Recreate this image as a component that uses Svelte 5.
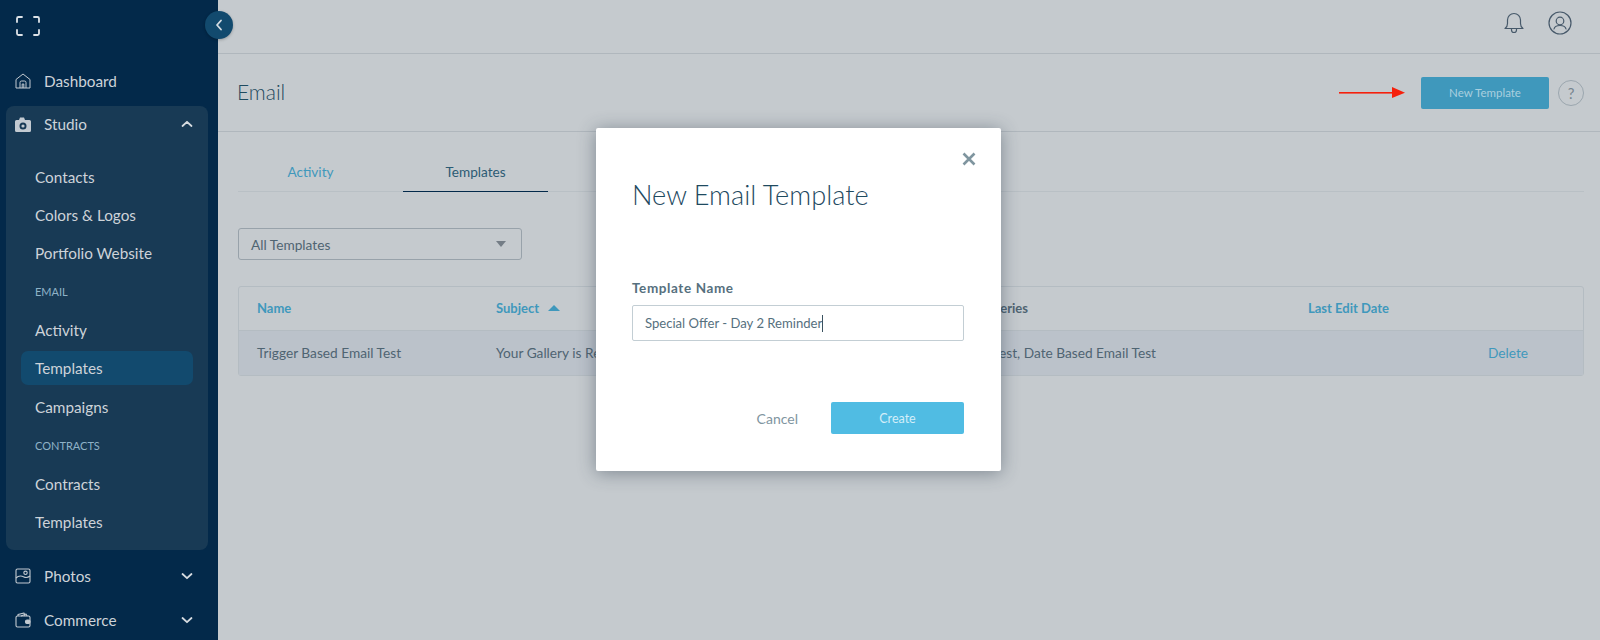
<script>
	const studioItems = [
		{ label: "Contacts" },
		{ label: "Colors & Logos" },
		{ label: "Portfolio Website" },
		{ label: "EMAIL", heading: true },
		{ label: "Activity" },
		{ label: "Templates", active: true },
		{ label: "Campaigns" },
		{ label: "CONTRACTS", heading: true },
		{ label: "Contracts" },
		{ label: "Templates" }
	];
</script>

<div class="page">
	<aside class="sidebar">
		<div class="logo-row">
			<svg class="logo" width="26" height="22" viewBox="0 0 26 22" fill="none" stroke="currentColor" stroke-width="1.800" stroke-linecap="round" stroke-linejoin="round">
				<path d="M7 2H3.500A1.500 1.500 0 0 0 2 3.500V7" />
				<path d="M19 2h3.500A1.500 1.500 0 0 1 24 3.500V7" />
				<path d="M2 15v3.500A1.500 1.500 0 0 0 3.500 20H7" />
				<path d="M24 15v3.500a1.500 1.500 0 0 1-1.500 1.500H19" />
			</svg>
		</div>

		<div class="nav-row">
			<svg class="nav-icon" width="16" height="16" viewBox="0 0 16 16" fill="none" stroke="currentColor" stroke-width="1" stroke-linejoin="round">
				<path d="M1 6.500 8 1l7 5.500V15H1z" />
				<path d="M5 15V9.500A1.500 1.500 0 0 1 6.500 8h3A1.500 1.500 0 0 1 11 9.500V15" />
				<path d="M7.200 15v-4h1.600v4" />
			</svg>
			<span>Dashboard</span>
		</div>

		<div class="studio">
			<div class="nav-row studio-head">
				<svg class="nav-icon" width="16" height="15" viewBox="0 0 16 15">
					<path fill="currentColor" fill-rule="evenodd" d="M1.500 3H4l1-2.500h4L10 3h4.500A1.500 1.500 0 0 1 16 4.500v9a1.500 1.500 0 0 1-1.500 1.500h-13A1.500 1.500 0 0 1 0 13.500v-9A1.500 1.500 0 0 1 1.500 3zM8 5.500a3.500 3.500 0 1 0 0 7 3.500 3.500 0 0 0 0-7z" />
					<circle cx="8" cy="9" r="1.600" fill="currentColor" />
				</svg>
				<span>Studio</span>
				<svg class="chevron" width="12" height="8" viewBox="0 0 12 8" fill="none" stroke="currentColor" stroke-width="1.800" stroke-linecap="round" stroke-linejoin="round">
					<path d="M1.500 6 6 1.800 10.500 6" />
				</svg>
			</div>
			<ul class="sub-list">
				{#each studioItems as item}
					<li class="sub-item" class:heading={item.heading} class:active={item.active}>
						<span>{item.label}</span>
					</li>
				{/each}
			</ul>
		</div>

		<div class="nav-row lower">
			<svg class="nav-icon" width="16" height="16" viewBox="0 0 16 16" fill="none" stroke="currentColor" stroke-width="1.100" stroke-linejoin="round">
				<rect x="1" y="1" width="14" height="14" rx="1.500" />
				<path d="M1 10c3-3 6-2 8-1s4 .5 6-1" />
				<circle cx="10.500" cy="4.800" r="1.700" />
			</svg>
			<span>Photos</span>
			<svg class="chevron" width="12" height="8" viewBox="0 0 12 8" fill="none" stroke="currentColor" stroke-width="1.800" stroke-linecap="round" stroke-linejoin="round">
				<path d="M1.500 2 6 6.200 10.500 2" />
			</svg>
		</div>
		<div class="nav-row">
			<svg class="nav-icon" width="16" height="16" viewBox="0 0 16 16" fill="none" stroke="currentColor" stroke-width="1.100" stroke-linejoin="round">
				<rect x="1" y="4" width="14" height="11" rx="1.500" />
				<path d="M3 4V2.500l6-1.500 1 3M6 4l5-2 1 2" />
				<rect x="10.500" y="8" width="4.500" height="3.500" rx="1.500" fill="currentColor" />
			</svg>
			<span>Commerce</span>
			<svg class="chevron" width="12" height="8" viewBox="0 0 12 8" fill="none" stroke="currentColor" stroke-width="1.800" stroke-linecap="round" stroke-linejoin="round">
				<path d="M1.500 2 6 6.200 10.500 2" />
			</svg>
		</div>
	</aside>

	<main class="main">
		<header class="topbar">
			<svg width="20" height="22" viewBox="0 0 20 22" fill="none" stroke="currentColor" stroke-width="1.200" stroke-linecap="round" stroke-linejoin="round">
				<path d="M1 16.500c1.500-1 2.500-2.500 2.500-5V8a6.500 6.500 0 0 1 13 0v3.500c0 2.500 1 4 2.500 5z" />
				<path d="M7.500 17v1a2.500 2.500 0 0 0 5 0v-1" />
			</svg>
			<svg width="24" height="24" viewBox="0 0 24 24" fill="none" stroke="currentColor" stroke-width="1.200" stroke-linecap="round">
				<circle cx="12" cy="12" r="11" />
				<circle cx="12" cy="10" r="3.800" />
				<path d="M6 18c.5-2.500 2.500-3.500 6-3.500s5.500 1 6 3.500" />
			</svg>
		</header>

		<div class="title-row">
			<h1>Email</h1>
			<svg class="arrow" width="66" height="14" viewBox="0 0 66 14">
				<rect x="0" y="6" width="54" height="1.600" fill="#f5200c" />
				<path d="M53 1l13 5.800L53 12z" fill="#f5200c" />
			</svg>
			<div class="new-btn">New Template</div>
			<div class="help">?</div>
		</div>

		<div class="content">
			<nav class="tabs">
				<div class="tab">Activity</div>
				<div class="tab current">Templates</div>
			</nav>

			<div class="select">
				<span>All Templates</span>
				<i class="caret"></i>
			</div>

			<div class="table">
				<div class="tr thead">
					<div class="link">Name</div>
					<div class="link">Subject <i class="sort"></i></div>
					<div class="dark">Used in Campaign Series</div>
					<div class="link">Last Edit Date</div>
					<div></div>
				</div>
				<div class="tr tbody">
					<div>Trigger Based Email Test</div>
					<div>Your Gallery is Ready</div>
					<div>Trigger Based Email Test, Date Based Email Test</div>
					<div></div>
					<div class="link plain">Delete</div>
				</div>
			</div>
		</div>
	</main>

	<button class="collapse" aria-label="Collapse sidebar">
		<svg width="8" height="12" viewBox="0 0 8 12" fill="none" stroke="currentColor" stroke-width="1.800" stroke-linecap="round" stroke-linejoin="round">
			<path d="M6 1.500 2 6l4 4.500" />
		</svg>
	</button>

	<div class="modal">
		<svg class="close" width="14" height="14" viewBox="0 0 14 14" fill="none" stroke="currentColor" stroke-width="2.600">
			<path d="M1.500 1.500l11 11M12.500 1.500l-11 11" />
		</svg>
		<h2>New Email Template</h2>
		<div class="field-label">Template Name</div>
		<div class="input"><span>Special Offer - Day 2 Reminder</span><i class="cursor"></i></div>
		<div class="actions">
			<span class="cancel">Cancel</span>
			<div class="create">Create</div>
		</div>
	</div>
</div>

<style>
	:global(body) {
		margin: 0;
		background: #c5cace;
	}

	.page {
		position: relative;
		display: flex;
		width: 1600px;
		height: 640px;
		overflow: hidden;
		background: #c5cace;
		font-family: Lato, "Open Sans", sans-serif;
		color: #4f6472;
	}

	/* sidebar */
	.sidebar {
		flex: 0 0 218px;
		background: #03294a;
		color: #cdd3d9;
		font-size: 15.300px;
	}

	.logo-row {
		height: 59px;
		padding: 15px 0 0 15px;
		box-sizing: border-box;
	}

	.logo {
		display: block;
		color: #dde2e7;
	}

	.nav-row {
		display: flex;
		align-items: center;
		height: 44px;
		padding: 0 25px 0 15px;
	}

	.nav-row > span {
		margin-left: 13px;
		flex: 1;
	}

	.nav-icon {
		flex: none;
		width: 16px;
		color: #c3cad1;
	}

	.chevron {
		color: #d6dbe0;
	}

	.lower {
		margin-top: 4px;
	}

	.studio {
		margin: 3px 10px 0 6px;
		height: 444px;
		background: #183a55;
		border-radius: 8px;
	}

	.studio-head {
		height: 36px;
		padding: 0 15px 0 9px;
	}

	.sub-list {
		list-style: none;
		margin: 17.500px 0 0;
		padding: 0 15px;
	}

	.sub-item {
		display: flex;
		align-items: center;
		height: 34px;
		padding: 0 14px;
		margin-bottom: 4.400px;
		border-radius: 7px;
	}

	.sub-item.heading {
		font-size: 11px;
		color: #8fb2c7;
	}

	.sub-item.active {
		background: #124a6e;
	}

	.collapse {
		position: absolute;
		left: 205px;
		top: 11px;
		display: flex;
		align-items: center;
		justify-content: center;
		width: 28px;
		height: 28px;
		padding: 0;
		border: 0;
		border-radius: 50%;
		background: #124a6e;
		color: #d5dde3;
		box-shadow: 0 1px 3px rgba(0, 0, 0, 0.25);
	}

	/* main column */
	.main {
		flex: 1;
		min-width: 0;
	}

	.topbar {
		display: flex;
		justify-content: flex-end;
		align-items: center;
		gap: 24px;
		height: 54px;
		padding: 0 28px 8px 0;
		box-sizing: border-box;
		border-bottom: 1px solid #b0b7bd;
		color: #47596a;
	}

	.title-row {
		display: flex;
		align-items: center;
		height: 77px;
		box-sizing: content-box;
		padding: 0 16px 0 19px;
		border-bottom: 1px solid #b0b7bd;
	}

	h1 {
		flex: 1;
		margin: 0 0 2px;
		font-size: 21px;
		font-weight: 300;
		color: #1f4a5f;
	}

	.arrow {
		margin-right: 16px;
	}

	.new-btn {
		width: 128px;
		height: 32px;
		line-height: 32px;
		text-align: center;
		font-size: 11.500px;
		color: #a9cfdf;
		background: #3f98bc;
		border-radius: 2px;
	}

	.help {
		width: 24px;
		height: 24px;
		margin-left: 9px;
		line-height: 24px;
		text-align: center;
		font-size: 15px;
		color: #77858f;
		border: 1px solid #9ba6ae;
		border-radius: 50%;
	}

	.content {
		padding: 0 16px 0 20px;
	}

	.tabs {
		display: flex;
		height: 59px;
		border-bottom: 1px solid #b9c0c5;
	}

	.tab {
		width: 145px;
		margin-right: 20px;
		padding-top: 32px;
		box-sizing: border-box;
		text-align: center;
		font-size: 13.600px;
		color: #3f98bc;
	}

	.tab.current {
		margin-bottom: -1px;
		color: #2c5b74;
		border-bottom: 1px solid #03294a;
	}

	.select {
		display: flex;
		align-items: center;
		justify-content: space-between;
		width: 284px;
		height: 32px;
		margin-top: 36px;
		padding: 0 15px 0 12px;
		box-sizing: border-box;
		font-size: 13.700px;
		color: #4f6472;
		border: 1px solid #98a2aa;
		border-radius: 3px;
	}

	.caret {
		width: 0;
		height: 0;
		border-left: 5.500px solid transparent;
		border-right: 5.500px solid transparent;
		border-top: 6px solid #747d86;
	}

	.table {
		margin-top: 26px;
		border: 1px solid #b4bcc2;
		border-radius: 3px;
		font-size: 13.700px;
	}

	.tr {
		display: grid;
		grid-template-columns: 239px 377px 435px 180px 1fr;
		align-items: center;
		padding-left: 18px;
	}

	.thead {
		height: 41px;
		padding-bottom: 2px;
		font-size: 13px;
		border-bottom: 1px solid #b4bcc2;
		font-weight: 700;
	}

	.thead .dark {
		padding-left: 13px;
	}

	.tbody {
		height: 43px;
		padding-bottom: 1px;
		background: #bbc2ca;
	}

	.link {
		color: #3f98bc;
	}

	.plain {
		font-weight: 400;
	}

	.dark {
		color: #4f6472;
	}

	.sort {
		display: inline-block;
		width: 0;
		height: 0;
		margin-left: 6px;
		vertical-align: 2px;
		border-left: 6px solid transparent;
		border-right: 6px solid transparent;
		border-bottom: 6px solid #3f98bc;
	}

	/* dialog */
	.modal {
		position: absolute;
		left: 596px;
		top: 128px;
		width: 405px;
		height: 343px;
		padding: 52px 37px 0 36px;
		box-sizing: border-box;
		background: #fff;
		border-radius: 2px;
		box-shadow: 0 2px 18px rgba(40, 55, 70, 0.45);
	}

	.close {
		position: absolute;
		top: 24px;
		right: 25px;
		color: #7f959f;
	}

	h2 {
		margin: 0;
		font-size: 27.200px;
		line-height: 30px;
		font-weight: 300;
		color: #1f4a5f;
	}

	.field-label {
		margin-top: 69px;
		font-size: 13.500px;
		line-height: 18px;
		font-weight: 700;
		letter-spacing: 0.6px;
		color: #56707e;
	}

	.input {
		display: flex;
		align-items: center;
		height: 34px;
		margin-top: 8px;
		padding: 0 12px;
		font-size: 13.100px;
		color: #56707e;
		border: 1px solid #c3ced4;
		border-radius: 2px;
	}

	.cursor {
		width: 1px;
		height: 17px;
		background: #3a5260;
	}

	.actions {
		display: flex;
		align-items: center;
		justify-content: flex-end;
		margin-top: 61px;
	}

	.cancel {
		margin-right: 33px;
		font-size: 14px;
		color: #7f959f;
	}

	.create {
		width: 133px;
		height: 32px;
		line-height: 34px;
		text-align: center;
		font-size: 12.500px;
		color: #d3eef9;
		background: #50bce3;
		border-radius: 2px;
	}
</style>
